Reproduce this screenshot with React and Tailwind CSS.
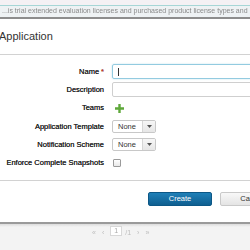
import React from 'react';

const Label = ({ children }) => (
  <div className="w-[104px] shrink-0 text-right text-[7.5px] text-[#262626] leading-none whitespace-nowrap [text-shadow:0_0_0.3px_#262626]">
    {children}
  </div>
);

const Select = () => (
  <div className="flex h-[13px] w-[44px] border border-[#c8c8c8] rounded-[2px] bg-white overflow-hidden">
    <div className="flex-1 flex items-center pl-[5px] text-[7.5px] text-[#333]">None</div>
    <div className="w-[13px] flex items-center justify-center border-l border-[#d6d6d6] bg-gradient-to-b from-[#f7f7f7] to-[#e6e6e6]">
      <svg width="5" height="3" viewBox="0 0 5 3">
        <path d="M0 0H5L2.5 3Z" fill="#555" />
      </svg>
    </div>
  </div>
);

export default function App() {
  return (
    <div className="w-[250px] h-[250px] overflow-hidden flex flex-col bg-[#f3f3f3] font-['Liberation_Sans',Arial,sans-serif]">
      {/* page behind the dialog */}
      <div className="h-[5px] shrink-0 bg-[#f4f1f4]" />
      <div className="h-[1px] shrink-0 bg-[#a6d6d6]" />
      <div className="h-[11px] shrink-0 bg-[#eef2f4] flex items-center overflow-hidden">
        <span className="text-[7px] text-[#8a8a8a] whitespace-nowrap blur-[0.6px] pl-[2px]">
          ...is trial extended evaluation licenses and purchased product license types and
        </span>
      </div>
      <div className="h-[2px] shrink-0 bg-[#8d8d8d]" />

      {/* dialog */}
      <div className="w-[320px] shrink-0 bg-white flex flex-col">
        <div className="h-[35px] flex items-center">
          <h2 className="text-[11px] text-[#333] leading-none -ml-[1px]">Application</h2>
        </div>
        <div className="h-[1px] bg-[#d2d2d2]" />

        <div className="pt-[7.35px] pb-[7.85px] flex flex-col">
          <div className="h-[18.3px] flex items-center gap-[8px]">
            <Label>
              Name<span className="text-[#d9362b] ml-[2px]">*</span>
            </Label>
            <div className="relative h-[15px] w-[180px] border border-[#93cbe0] rounded-[2px] shadow-[0_0_2px_#bfe0ec]">
              <div className="absolute left-[5px] top-[3px] w-[1px] h-[8px] bg-[#333]" />
            </div>
          </div>
          <div className="h-[18.3px] flex items-center gap-[8px]">
            <Label>Description</Label>
            <div className="h-[15px] w-[180px] border border-[#cfcfcf] rounded-[2px]" />
          </div>
          <div className="h-[18.3px] flex items-center gap-[8px]">
            <Label>Teams</Label>
            <svg width="9" height="9" viewBox="0 0 9 9" className="ml-[3px]">
              <path d="M3.3 0H5.7V3.3H9V5.7H5.7V9H3.3V5.7H0V3.3H3.3Z" fill="#5ea83a" />
            </svg>
          </div>
          <div className="h-[18.3px] flex items-center gap-[8px]">
            <Label>Application Template</Label>
            <Select />
          </div>
          <div className="h-[18.3px] flex items-center gap-[8px]">
            <Label>Notification Scheme</Label>
            <Select />
          </div>
          <div className="h-[18.3px] flex items-center gap-[8px]">
            <Label>Enforce Complete Snapshots</Label>
            <div className="ml-[1px] w-[8px] h-[8px] border border-[#9a9a9a] rounded-[1px] bg-gradient-to-b from-white to-[#e9e9e9]" />
          </div>
        </div>

        <div className="h-[1px] bg-[#d2d2d2]" />
        <div className="pt-[11px] pb-[16px] pl-[148px] flex gap-[8px]">
          <button className="h-[14px] w-[64px] rounded-[2px] border border-[#0c5786] bg-gradient-to-b from-[#1f80b8] to-[#0f5f90] text-white text-[7.5px] leading-none">
            Create
          </button>
          <button className="h-[14px] w-[64px] rounded-[2px] border border-[#c9c9c9] bg-gradient-to-b from-[#f8f8f8] to-[#e4e4e4] text-[#333] text-[7.5px] leading-none">
            Cancel
          </button>
        </div>
      </div>
      <div className="h-[2px] shrink-0 bg-[#9a9a9a]" />
      <div className="h-[3px] shrink-0 bg-gradient-to-b from-[#dcdcdc] to-[#f3f3f3]" />

      {/* pagination behind */}
      <div className="flex items-start gap-[6px] pl-[92px] text-[7px] text-[#bdbdbd] blur-[0.4px]">
        <span className="mt-[1px]">«</span>
        <span className="mt-[1px]">‹</span>
        <span className="-mt-[1px] w-[12px] h-[10px] border border-[#d8d8d8] bg-white flex items-center justify-center text-[#aaa]">1</span>
        <span className="mt-[1px] -ml-[3px]">/1</span>
        <span className="mt-[1px]">›</span>
        <span className="mt-[1px]">»</span>
      </div>
    </div>
  );
}
